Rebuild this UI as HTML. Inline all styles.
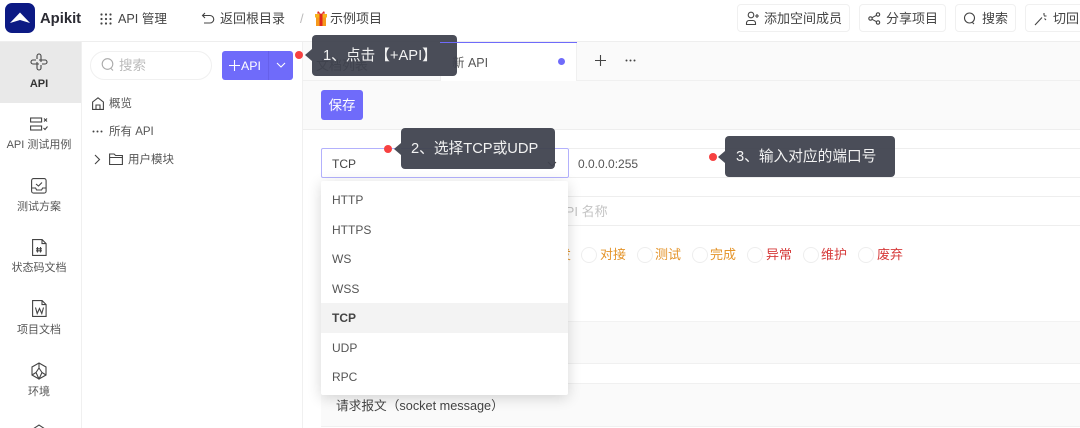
<!DOCTYPE html>
<html lang="zh"><head><meta charset="utf-8"><title>Apikit</title>
<style>
html,body{margin:0;padding:0;background:#fff}
#p{position:relative;width:1080px;height:428px;overflow:hidden;background:#fff;font-family:"Liberation Sans","Noto Sans CJK SC",sans-serif;color:#333;font-size:13px}
#p div,#p span.t{position:absolute;white-space:nowrap}
.t{position:absolute;white-space:nowrap;line-height:18px}
svg{position:absolute;fill:none;stroke:#444;stroke-width:1.1}
.btn{border:1px solid #f0f0f0;border-radius:4px;height:28px;top:4px;box-sizing:border-box;background:#fff}
.nav{font-size:11px;color:#555;width:78px;text-align:center;left:0;line-height:16px}
.line{background:#eee;height:1px}
.tip{background:rgba(63,66,78,.94);border-radius:4px;color:#f2f2f2;font-size:14.7px;line-height:43px;height:41px;box-sizing:border-box;z-index:10}
.arr{width:0;height:0;border:6px solid transparent;border-right:7px solid #4a4d58;border-left:0;z-index:10}
.dot{width:8px;height:8px;border-radius:50%;background:#f74141;z-index:10}
.opt{left:332px;font-size:12px;color:#555;line-height:18px;z-index:6}
.rad{width:14px;height:14px;border:1px solid #eee;border-radius:50%;top:247px}
.st{top:246px;font-size:13px;line-height:18px}
</style></head><body><div id="p">

<!-- top bar -->
<div style="left:5px;top:3px;width:30px;height:30px;border-radius:7px;background:#0c1a84"></div>
<svg style="left:5px;top:3px;stroke:none;fill:#fff" width="30" height="30" viewBox="0 0 30 30"><path d="M15 9.500 L25 20 L15 17 L5 20Z"/></svg>
<span class="t" style="left:40px;top:10px;font-size:14.800px;font-weight:bold;color:#2b2b33">Apikit</span>
<svg style="left:100px;top:13px;stroke:none;fill:#444" width="12" height="12" viewBox="0 0 12 12"><circle cx="1.500" cy="1.500" r="1.100"/><circle cx="6" cy="1.500" r="1.100"/><circle cx="10.500" cy="1.500" r="1.100"/><circle cx="1.500" cy="6" r="1.100"/><circle cx="6" cy="6" r="1.100"/><circle cx="10.500" cy="6" r="1.100"/><circle cx="1.500" cy="10.500" r="1.100"/><circle cx="6" cy="10.500" r="1.100"/><circle cx="10.500" cy="10.500" r="1.100"/></svg>
<span class="t" style="left:118px;top:10px;color:#444;font-size:12.600px">API 管理</span>
<svg style="left:201px;top:12px" width="14" height="13" viewBox="0 0 14 13"><path d="M4 1 1.500 3.500 4 6M1.500 3.500H9a3.600 3.600 0 0 1 0 7.500H3"/></svg>
<span class="t" style="left:220px;top:10px;color:#444">返回根目录</span>
<span class="t" style="left:300px;top:10px;color:#bbb">/</span>
<svg style="left:315px;top:11px;stroke:none" width="12" height="15" viewBox="0 0 12 15"><rect x="0" y="3" width="12" height="3.500" fill="#f7b21a"/><rect x="1" y="6.500" width="10" height="8.500" fill="#f59a1d"/><rect x="4.500" y="3" width="3" height="12" fill="#e0281f"/><path d="M6 3 3 0 2 2.500ZM6 3 9 0 10 2.500Z" fill="#e0281f"/></svg>
<span class="t" style="left:330px;top:10px;color:#444">示例项目</span>

<div class="btn" style="left:737px;width:113px"></div>
<svg style="left:745px;top:11px" width="15" height="15" viewBox="0 0 15 15"><circle cx="6" cy="4" r="2.800"/><path d="M1.500 13.500v-1.500a2.500 2.500 0 0 1 2.500-2.500h4a2.500 2.500 0 0 1 2.500 2.500v1.500zM12 3v4M10 5h4"/></svg>
<span class="t" style="left:764px;top:10px;color:#444">添加空间成员</span>
<div class="btn" style="left:859px;width:87px"></div>
<svg style="left:868px;top:12px" width="13" height="13" viewBox="0 0 13 13"><circle cx="2.500" cy="6.500" r="1.700"/><circle cx="10" cy="2.500" r="1.700"/><circle cx="10" cy="10.500" r="1.700"/><path d="M4 5.700 8.500 3.300M4 7.300l4.500 2.400"/></svg>
<span class="t" style="left:886px;top:10px;color:#444">分享项目</span>
<div class="btn" style="left:955px;width:61px"></div>
<svg style="left:963px;top:12px" width="14" height="14" viewBox="0 0 14 14"><circle cx="6.500" cy="6" r="5"/><path d="M9.500 10.500l1.500 1.500"/></svg>
<span class="t" style="left:982px;top:10px;color:#444">搜索</span>
<div class="btn" style="left:1025px;width:70px"></div>
<svg style="left:1034px;top:12px" width="14" height="14" viewBox="0 0 14 14"><path d="M1 13 8 5.500M10 1v2.500M12.500 4H10M12 8 10.500 6.500"/></svg>
<span class="t" style="left:1053px;top:10px;color:#444">切回旧版</span>
<div class="line" style="left:0;top:41px;width:1080px"></div>

<!-- left rail -->
<div style="left:0;top:42px;width:81px;height:61px;background:#e9e9e9"></div>
<div style="left:81px;top:42px;width:1px;height:386px;background:#f0f0f0"></div>
<svg style="left:30px;top:53px" width="18" height="18" viewBox="0 0 18 18"><path d="M7 6V3a2 2 0 0 1 4 0v6M11 12v3a2 2 0 0 1-4 0V9M6 7H3a2 2 0 0 0 0 4h6M12 11h3a2 2 0 0 0 0-4H9"/></svg>
<div class="nav" style="top:76px;font-weight:bold;color:#333">API</div>
<svg style="left:30px;top:117px" width="18" height="15" viewBox="0 0 18 15"><rect x=".6" y="1" width="11" height="4"/><rect x=".6" y="9" width="11" height="4"/><path d="M14 1.500l3 3M17 1.500l-3 3M13.500 11l1.500 1.500 2.500-3"/></svg>
<div class="nav" style="top:137px">API 测试用例</div>
<svg style="left:31px;top:178px" width="16" height="16" viewBox="0 0 16 16"><rect x=".6" y=".6" width="14.500" height="14.500" rx="2"/><path d="M.6 10h4l1 2h5l1-2h3.500M5 6l2.500 2L11 4.500"/></svg>
<div class="nav" style="top:199px">测试方案</div>
<svg style="left:32px;top:239px" width="15" height="17" viewBox="0 0 15 17"><path d="M.6.600h9.500l4 4v11.800H.6zM10 .6v4h4"/><path d="M5.500 8v5.500M8.500 8v5.500M4 9.800h6M4 11.800h6"/></svg>
<div class="nav" style="top:260px">状态码文档</div>
<svg style="left:32px;top:300px" width="15" height="17" viewBox="0 0 15 17"><path d="M.6.600h9.500l4 4v11.800H.6zM10 .6v4h4"/><path d="M3.500 7.500l1.700 6 2.300-5 2.300 5 1.700-6"/></svg>
<div class="nav" style="top:322px">项目文档</div>
<svg style="left:31px;top:362px" width="16" height="18" viewBox="0 0 16 18"><path d="M8 1 15 5v8l-7 4-7-4V5zM8 1v5M1 13l4-2.500M15 13l-4-2.500M8 6l3 4.500-3 6.500-3-6.500z"/></svg>
<div class="nav" style="top:384px">环境</div>
<svg style="left:31px;top:424px" width="16" height="10" viewBox="0 0 16 10"><path d="M2 10V5L8 1l6 4v5"/></svg>

<!-- sidebar -->
<div style="left:302px;top:42px;width:1px;height:386px;background:#f0f0f0"></div>
<div style="left:90px;top:51px;width:122px;height:29px;box-sizing:border-box;border:1px solid #f0f0f0;border-radius:15px"></div>
<svg style="left:101px;top:58px;stroke:#aaa" width="14" height="14" viewBox="0 0 14 14"><circle cx="6.500" cy="6" r="5.300"/><path d="M10 10.500l2 2"/></svg>
<span class="t" style="left:119px;top:57px;color:#bbb;font-size:13.500px">搜索</span>
<div style="left:222px;top:51px;width:71px;height:29px;background:#6f6bfa;border-radius:3px"></div>
<div style="left:268px;top:51px;width:1px;height:29px;background:#6660ea"></div>
<svg style="left:229px;top:60px;stroke:#fff" width="11" height="11" viewBox="0 0 11 11"><path d="M5.500 0v11M0 5.500h11"/></svg>
<span class="t" style="left:241px;top:57px;color:#fff;font-size:12.400px">API</span>
<svg style="left:276px;top:62px;stroke:#fff" width="10" height="6" viewBox="0 0 10 6"><path d="M1 1l4 4 4-4"/></svg>
<svg style="left:92px;top:97px" width="12" height="13" viewBox="0 0 12 13"><path d="M.6 5 6 .8 11.400 5v7.400H.6zM4 12.400V8h4v4.400"/></svg>
<span class="t" style="left:109px;top:95px;font-size:11.500px;color:#555">概览</span>
<svg style="left:92px;top:130px;stroke:none;fill:#444" width="11" height="3" viewBox="0 0 11 3"><circle cx="1.500" cy="1.500" r="1"/><circle cx="5.500" cy="1.500" r="1"/><circle cx="9.500" cy="1.500" r="1"/></svg>
<span class="t" style="left:109px;top:123px;font-size:11.500px;color:#555">所有 API</span>
<svg style="left:94px;top:154px" width="7" height="11" viewBox="0 0 7 11"><path d="M1 1l4.500 4.500L1 10"/></svg>
<svg style="left:109px;top:153px" width="14" height="12" viewBox="0 0 14 12"><path d="M.6 1h4.500l1.500 1.500h6.800v9H.6zM.6 4.500h12.800"/></svg>
<span class="t" style="left:128px;top:151px;font-size:11.500px;color:#555">用户模块</span>

<!-- tabs and toolbar -->
<div style="left:303px;top:42px;width:777px;height:87px;background:#fafafa"></div>
<div class="line" style="left:303px;top:80px;width:777px;background:#f0f0f0"></div>
<div class="line" style="left:303px;top:129px;width:777px"></div>
<span class="t" style="left:316px;top:57px;color:#555">文档列表</span>
<div style="left:440px;top:43px;width:137px;height:38px;background:#fff;border-left:1px solid #f0f0f0;border-right:1px solid #f0f0f0;box-sizing:border-box"></div>
<div style="left:440px;top:42px;width:137px;height:1px;background:#6f6bfa;z-index:12"></div>
<span class="t" style="left:452px;top:54px;color:#555;font-size:12.500px">新 API</span>
<div style="left:558px;top:58px;width:7px;height:7px;border-radius:50%;background:#6f6bfa"></div>
<svg style="left:595px;top:55px" width="11" height="11" viewBox="0 0 11 11"><path d="M5.500 0v11M0 5.500h11"/></svg>
<svg style="left:625px;top:59px;stroke:none;fill:#444" width="11" height="3" viewBox="0 0 11 3"><circle cx="1.500" cy="1.500" r="1"/><circle cx="5.500" cy="1.500" r="1"/><circle cx="9.500" cy="1.500" r="1"/></svg>
<div style="left:321px;top:90px;width:42px;height:30px;background:#6f6bfa;border-radius:3px;color:#fff;text-align:center;line-height:31px;font-size:13.500px">保存</div>

<!-- form -->
<div class="line" style="left:569px;top:148px;width:511px"></div>
<div class="line" style="left:569px;top:177px;width:511px"></div>
<div style="left:321px;top:148px;width:248px;height:30px;box-sizing:border-box;border:1px solid #b3b1fc;border-radius:2px"></div>
<svg style="left:547px;top:161px" width="10" height="6" viewBox="0 0 10 6"><path d="M1 1l4 4 4-4"/></svg>
<span class="t" style="left:332px;top:155px;font-size:12px;color:#444">TCP</span>
<span class="t" style="left:578px;top:155px;font-size:12px;color:#555">0.0.0.0:255</span>
<div class="line" style="left:321px;top:196px;width:759px"></div>
<div class="line" style="left:321px;top:225px;width:759px"></div>
<span class="t" style="left:557px;top:203px;color:#c4c4c4">API 名称</span>

<span class="t st" style="left:545px;color:#e4942a">开发</span>
<div class="rad" style="left:581px"></div><span class="t st" style="left:600px;color:#e4942a">对接</span>
<div class="rad" style="left:637px"></div><span class="t st" style="left:655px;color:#e4942a">测试</span>
<div class="rad" style="left:692px"></div><span class="t st" style="left:710px;color:#e4942a">完成</span>
<div class="rad" style="left:747px"></div><span class="t st" style="left:766px;color:#d63a3a">异常</span>
<div class="rad" style="left:803px"></div><span class="t st" style="left:821px;color:#d63a3a">维护</span>
<div class="rad" style="left:858px"></div><span class="t st" style="left:877px;color:#d63a3a">废弃</span>

<div style="left:321px;top:321px;width:759px;height:43px;box-sizing:border-box;background:#fafafa;border-top:1px solid #f2f2f2;border-bottom:1px solid #f0f0f0"></div>
<div style="left:321px;top:383px;width:759px;height:44px;box-sizing:border-box;background:#fafafa;border-top:1px solid #f0f0f0;border-bottom:1px solid #f0f0f0"></div>
<span class="t" style="left:336px;top:397px;color:#444;font-size:12.700px">请求报文（socket message）</span>

<!-- dropdown -->
<div style="left:321px;top:181px;width:247px;height:214px;background:#fff;border-radius:2px;box-shadow:0 3px 14px rgba(0,0,0,.16);z-index:5"></div>
<div style="left:321px;top:303px;width:247px;height:30px;background:#f3f3f3;z-index:6"></div>
<span class="t opt" style="top:191px">HTTP</span>
<span class="t opt" style="top:221px">HTTPS</span>
<span class="t opt" style="top:250px">WS</span>
<span class="t opt" style="top:280px">WSS</span>
<span class="t opt" style="top:309px;font-weight:bold;color:#444">TCP</span>
<span class="t opt" style="top:339px">UDP</span>
<span class="t opt" style="top:368px">RPC</span>

<!-- tooltips -->
<div class="dot" style="left:295px;top:51px"></div>
<div class="arr" style="left:305px;top:49px"></div>
<div class="tip" style="left:312px;top:35px;width:145px;padding-left:11px">1、点击【+API】</div>
<div class="dot" style="left:384px;top:145px"></div>
<div class="arr" style="left:394px;top:143px"></div>
<div class="tip" style="left:401px;top:128px;width:154px;padding-left:10px">2、选择TCP或UDP</div>
<div class="dot" style="left:709px;top:153px"></div>
<div class="arr" style="left:718px;top:151px"></div>
<div class="tip" style="left:725px;top:136px;width:170px;padding-left:11px">3、输入对应的端口号</div>
</div></body></html>
